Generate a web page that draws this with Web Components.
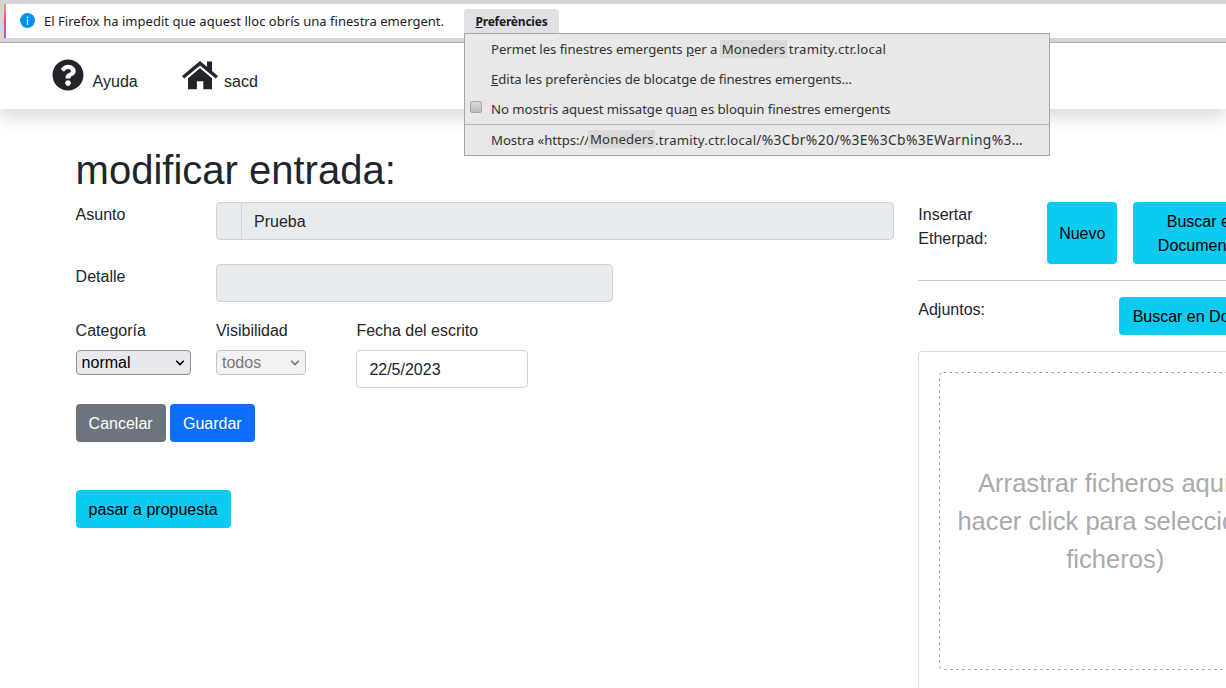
<!DOCTYPE html>
<html lang="ca">
<head>
<meta charset="utf-8">
<title>modificar entrada</title>
<style>
html,body{margin:0;height:688px;overflow:hidden;background:#fff}
body{font:16px/24px "Liberation Sans",Arial,sans-serif;color:#212529}
</style>
</head>
<body>
<entry-app></entry-app>
<script>
const define = (name, html) => {
  const t = document.createElement('template');
  t.innerHTML = html;
  customElements.define(name, class extends HTMLElement {
    constructor() {
      super();
      this.attachShadow({mode: 'open'}).append(t.content.cloneNode(true));
    }
  });
};

define('info-icon', `<style>:host{display:block;width:15px;height:15px}svg{display:block}</style>
<svg width="15" height="15" viewBox="0 0 15 15"><circle cx="7.5" cy="7.5" r="7.5" fill="#0090ed"/><circle cx="7.5" cy="4.3" r=".9" fill="#fff"/><path d="M7.5 6.7v4.6" stroke="#fff" stroke-width="1.3" stroke-linecap="round"/></svg>`);

define('help-icon', `<style>:host{display:block}svg{display:block}</style>
<svg width="32" height="32" viewBox="0 0 512 512"><path fill="#212529" d="M504 256c0 136.997-111.043 248-248 248S8 392.997 8 256C8 119.083 119.043 8 256 8s248 111.083 248 248zM262.655 90c-54.497 0-89.255 22.957-116.549 63.758-3.536 5.286-2.353 12.415 2.715 16.258l34.699 26.31c5.205 3.947 12.621 3.008 16.665-2.122 17.864-22.658 30.113-35.797 57.303-35.797 20.429 0 45.698 13.148 45.698 32.958 0 14.976-12.363 22.667-32.534 33.976C247.128 238.528 216 254.941 216 296v4c0 6.627 5.373 12 12 12h56c6.627 0 12-5.373 12-12v-1.333c0-28.462 83.186-29.647 83.186-106.667 0-58.002-60.165-102-116.531-102zM256 338c-25.365 0-46 20.635-46 46 0 25.364 20.635 46 46 46s46-20.636 46-46c0-25.365-20.635-46-46-46z"/></svg>`);

define('home-icon', `<style>:host{display:block}svg{display:block}</style>
<svg width="36" height="29" viewBox="0 0 36 29"><g fill="#212529"><path d="M18 0 25 5.800V.5h5v9.500l6 5-2.200 2.600L18 4.600 2.200 17.600 0 15z"/><path d="M18 7.300 30 17.200V28.300H21.300V20.300H14.900V28.300H6V17.200z"/></g></svg>`);

define('notification-bar', `<style>
:host{display:block;position:relative;z-index:2;height:43px;box-sizing:border-box;background:#d4d4d4;border-bottom:1px solid #a9a9a9;padding:4px 0 4px 4px;font-family:"Noto Sans",sans-serif;font-size:13px;color:#1c1b22}
.bar{display:flex;align-items:center;height:34px;background:#fff}
.stripe{width:2px;height:34px;background:linear-gradient(#ff9a5a,#f0429b 50%,#a155e8)}
info-icon{margin:-2px 9px 0 14px}
.msg{width:420px;white-space:nowrap;letter-spacing:.03px}
.pref{width:95px;height:25px;margin-top:1px;border-radius:4px 4px 0 0;background:#e0e0e6;font-weight:700;font-size:12px;letter-spacing:-.22px;line-height:25px;text-align:center}
</style><div class="bar"><span class="stripe"></span><info-icon></info-icon><span class="msg">El Firefox ha impedit que aquest lloc obrís una finestra emergent.</span><span class="pref"><u>P</u>referències</span></div><slot></slot>`);

define('popup-menu', `<style>
:host{position:absolute;left:464px;top:33px;width:586px;height:123px;box-sizing:border-box;border:1px solid #a5a5a5;background:#e8e8e8;color:#333;font:13.2px/30px "Noto Sans",sans-serif;display:block}
</style><slot></slot>`);

define('menu-row', `<style>
:host{display:flex;height:30px;padding-left:26px;white-space:pre;position:relative;letter-spacing:-.07px}
:host([line]){border-top:1px solid #b7b7b7}
i{display:none;position:absolute;left:5px;top:7px;width:10px;height:10px;border:1px solid #a5a5a5;border-radius:2px;background:linear-gradient(#d8d8d8,#bdbdbd)}
:host([check]) i{display:block}
</style><i></i><span><slot></slot></span>`);

define('host-tag', `<style>:host{display:inline-block;background:#d9d9d9;height:18px;line-height:18px;width:67px;text-align:left;text-indent:2px;letter-spacing:.1px}</style><slot></slot>`);

define('nav-bar', `<style>
:host{display:flex;box-sizing:border-box;height:66px;padding:16px 0 0 52px;background:#fff;box-shadow:0 8px 16px rgba(0,0,0,.15)}
div{display:flex}span{line-height:24px;margin-top:11px}
</style><div style="width:130px;gap:8.6px"><help-icon></help-icon><span>Ayuda</span></div><div style="gap:6px"><home-icon style="margin-top:2px"></home-icon><span>sacd</span></div>`);

define('ui-button', `<style>
:host{display:inline-flex;box-sizing:border-box;align-items:center;justify-content:center;height:38px;padding-top:2px;border-radius:4px;background:#0dcaf0;color:#000;text-align:center;white-space:nowrap;flex:none}
:host([kind=secondary]){background:#6c757d;color:#fff}
:host([kind=primary]){background:#0d6efd;color:#fff}
</style><span><slot></slot></span>`);

define('text-field', `<style>
:host{display:flex;box-sizing:border-box;height:38px;border:1px solid #ced4da;border-radius:4px;background:#e9ecef;line-height:38px;padding-left:12px}
:host([editable]){background:#fff}
:host([prefixed]){padding-left:0}
:host([prefixed])::before{content:"";width:24px;border-right:1px solid #ced4da;margin-right:12px}
</style><slot></slot>`);

define('select-field', `<style>
:host{display:flex;box-sizing:border-box;height:25px;border:1px solid #8f8f9d;border-radius:4px;background:#e9e9ed;color:#000;line-height:23px;padding:0 5px 0 5px;justify-content:space-between;align-items:center}
:host([disabled]){opacity:.55}
</style><slot></slot><svg width="10" height="6" viewBox="0 0 10 6"><path d="M1.200 .8 5 4.600 8.800 .8" fill="none" stroke="#000" stroke-width="1.600"/></svg>`);

define('drop-zone', `<style>
:host{display:block;box-sizing:border-box;width:394px;height:400px;border:1px solid #dcdcdc;border-radius:4px;padding:20px}
.z{position:relative;height:298px;display:flex;align-items:center;justify-content:center;text-align:center;font-size:25.6px;line-height:38px;color:#aaa;white-space:nowrap}
svg{position:absolute;inset:0}
</style><div class="z"><svg width="352" height="298"><rect x=".5" y=".5" width="351" height="297" rx="4" fill="none" stroke="#999" stroke-dasharray="2.500 3.500"/></svg><span><slot></slot></span></div>`);

define('entry-form', `<style>
:host{display:block;width:818.4px;flex:none}
h1{font-size:40px;line-height:48px;font-weight:400;margin:0 0 8px}
.row{display:grid;grid-template-columns:140.4px 1fr}
.row>span{line-height:24px;padding-top:1px}
.cols{display:grid;grid-template-columns:140.4px 140.4px 172px;margin-top:16px;align-items:start}
.cols>div>span{display:block;padding-top:1px;margin-bottom:7px}
.act{display:flex;gap:4px;margin-top:16px}
</style>
<h1>modificar entrada:</h1>
<div class="row"><span>Asunto</span><text-field prefixed>Prueba</text-field></div>
<div class="row" style="margin-top:24px"><span>Detalle</span><text-field style="width:397px"></text-field></div>
<div class="cols"><div><span>Categoría</span><select-field style="width:115px">normal</select-field></div><div><span>Visibilidad</span><select-field disabled style="width:90px">todos</select-field></div><div><span>Fecha del escrito</span><text-field editable>22/5/2023</text-field></div></div>
<div class="act"><ui-button kind="secondary" style="width:90px">Cancelar</ui-button><ui-button kind="primary" style="width:85.4px">Guardar</ui-button></div>
<ui-button style="width:155px;margin-top:48px">pasar a propuesta</ui-button>`);

define('attachment-panel', `<style>
:host{display:block;width:394px;flex:none;margin-top:56px}
.r{display:flex}
.r>span{padding-top:1px;margin-bottom:-1px}
hr{border:0;height:1px;background:#c8c9ca;margin:16px 0}
ui-button.t{height:62px}
</style>
<div class="r"><span style="width:129px">Insertar<br>Etherpad:</span><ui-button class="t" style="width:70px;margin-right:16px">Nuevo</ui-button><ui-button class="t" style="width:139px">Buscar en<br>Documentos</ui-button></div>
<hr>
<div class="r" style="justify-content:space-between;margin-bottom:16px"><span>Adjuntos:</span><ui-button style="width:193px">Buscar en Documentos</ui-button></div>
<drop-zone>Arrastrar ficheros aqui(o<br>hacer click para seleccionar<br>ficheros)</drop-zone>`);

define('entry-app', `<style>
:host{display:block;height:688px;overflow:hidden}
main{display:flex;gap:24.3px;padding:37px 0 0 75.6px}
</style>
<notification-bar><popup-menu><menu-row>Permet les finestres emergents <u>p</u>er a <host-tag style="margin-left:-1px">Moneders</host-tag><span style="margin-left:2px;letter-spacing:.2px">tramity.ctr.local</span></menu-row><menu-row><u>E</u>dita les preferències de blocatge de finestres emergents…</menu-row><menu-row check>No mostris aquest missatge qua<u>n</u> es bloquin finestres emergents</menu-row><menu-row line>Mostra «https://<host-tag style="position:relative;top:-1px;margin-left:-1px">Moneders</host-tag><span style="letter-spacing:.2px">.tramity.ctr.local</span><span style="font-size:13.8px;letter-spacing:.37px">/%3Cbr%20/%3E%3Cb%3EWarning%3…</span></menu-row></popup-menu></notification-bar>
<nav-bar></nav-bar>
<main><entry-form></entry-form><attachment-panel></attachment-panel></main>`);
</script>
</body>
</html>
